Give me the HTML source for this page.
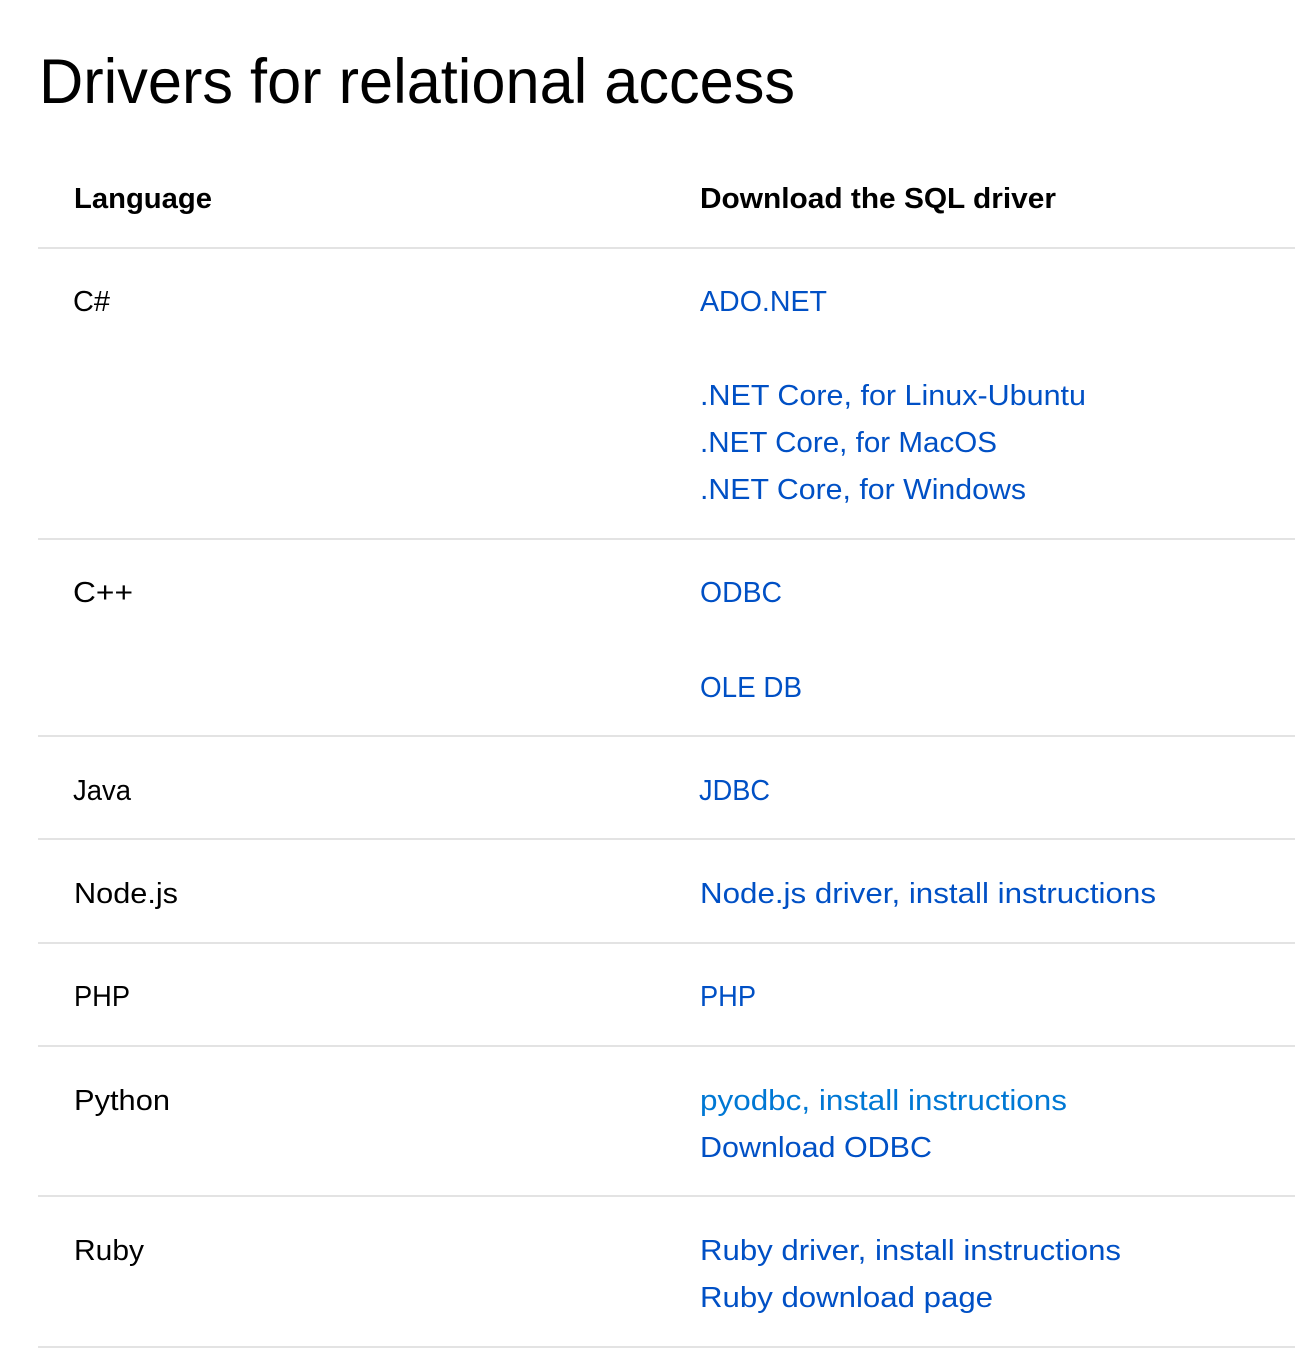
<!DOCTYPE html>
<html lang="en">
<head>
<meta charset="utf-8">
<title>Drivers for relational access</title>
<style>
html,body{margin:0;padding:0;background:#fff;width:1295px;height:1349px;overflow:hidden}
svg{display:block}
text{font-family:"Liberation Sans",sans-serif;font-size:29px;fill:#000}
.a{fill:#0050c5}
.b{fill:#0078d4}
.h{font-size:29px;font-weight:700}
.t{font-size:63px}
</style>
</head>
<body>
<svg width="1295" height="1349" viewBox="0 0 1295 1349" xmlns="http://www.w3.org/2000/svg">
<g fill="#e3e3e3">
<rect x="38" y="247" width="1257" height="2"/>
<rect x="38" y="538" width="1257" height="2"/>
<rect x="38" y="735" width="1257" height="2"/>
<rect x="38" y="838" width="1257" height="2"/>
<rect x="38" y="942" width="1257" height="2"/>
<rect x="38" y="1045" width="1257" height="2"/>
<rect x="38" y="1195" width="1257" height="2"/>
<rect x="38" y="1346" width="1257" height="2"/>
</g>
<g lengthAdjust="spacingAndGlyphs">
<text class="t" x="39" y="103" textLength="756" lengthAdjust="spacingAndGlyphs">Drivers for relational access</text>
<text class="h" x="74" y="208" textLength="138" lengthAdjust="spacingAndGlyphs">Language</text>
<text class="h" x="700" y="208" textLength="356" lengthAdjust="spacingAndGlyphs">Download the SQL driver</text>

<text x="73" y="311" textLength="37" lengthAdjust="spacingAndGlyphs">C#</text>
<text x="73" y="602" textLength="60" lengthAdjust="spacingAndGlyphs">C++</text>
<text x="73" y="800" textLength="58" lengthAdjust="spacingAndGlyphs">Java</text>
<text x="74" y="903" textLength="104" lengthAdjust="spacingAndGlyphs">Node.js</text>
<text x="74" y="1006" textLength="56" lengthAdjust="spacingAndGlyphs">PHP</text>
<text x="74" y="1110" textLength="96" lengthAdjust="spacingAndGlyphs">Python</text>
<text x="74" y="1260" textLength="70" lengthAdjust="spacingAndGlyphs">Ruby</text>

<text class="a" x="700" y="311" textLength="127" lengthAdjust="spacingAndGlyphs">ADO.NET</text>
<text class="a" x="700" y="405" textLength="386" lengthAdjust="spacingAndGlyphs">.NET Core, for Linux-Ubuntu</text>
<text class="a" x="700" y="452" textLength="297" lengthAdjust="spacingAndGlyphs">.NET Core, for MacOS</text>
<text class="a" x="700" y="499" textLength="326" lengthAdjust="spacingAndGlyphs">.NET Core, for Windows</text>
<text class="a" x="700" y="602" textLength="82" lengthAdjust="spacingAndGlyphs">ODBC</text>
<text class="a" x="700" y="697" textLength="102" lengthAdjust="spacingAndGlyphs">OLE DB</text>
<text class="a" x="699" y="800" textLength="71" lengthAdjust="spacingAndGlyphs">JDBC</text>
<text class="a" x="700" y="903" textLength="456" lengthAdjust="spacingAndGlyphs">Node.js driver, install instructions</text>
<text class="a" x="700" y="1006" textLength="56" lengthAdjust="spacingAndGlyphs">PHP</text>
<text class="b" x="700" y="1110" textLength="367" lengthAdjust="spacingAndGlyphs">pyodbc, install instructions</text>
<text class="a" x="700" y="1157" textLength="232" lengthAdjust="spacingAndGlyphs">Download ODBC</text>
<text class="a" x="700" y="1260" textLength="421" lengthAdjust="spacingAndGlyphs">Ruby driver, install instructions</text>
<text class="a" x="700" y="1307" textLength="293" lengthAdjust="spacingAndGlyphs">Ruby download page</text>
</g>
</svg>
</body>
</html>
